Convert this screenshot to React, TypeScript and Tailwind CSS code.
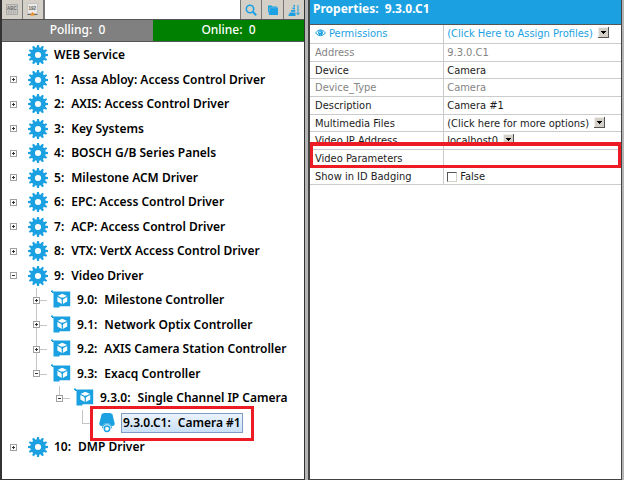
import type { ReactNode } from "react";
import clsx from "clsx";

type NodeKind = "gear" | "controller" | "camera";

interface TreeNode {
  level: number;
  kind: NodeKind;
  id?: string;
  name: string;
  toggle?: "plus" | "minus";
  last?: boolean;
  selected?: boolean;
}

const nodes: TreeNode[] = [
  { level: 0, kind: "gear", name: "WEB Service" },
  { level: 0, kind: "gear", id: "1", name: "Assa Abloy: Access Control Driver", toggle: "plus" },
  { level: 0, kind: "gear", id: "2", name: "AXIS: Access Control Driver", toggle: "plus" },
  { level: 0, kind: "gear", id: "3", name: "Key Systems", toggle: "plus" },
  { level: 0, kind: "gear", id: "4", name: "BOSCH G/B Series Panels", toggle: "plus" },
  { level: 0, kind: "gear", id: "5", name: "Milestone ACM Driver", toggle: "plus" },
  { level: 0, kind: "gear", id: "6", name: "EPC: Access Control Driver", toggle: "plus" },
  { level: 0, kind: "gear", id: "7", name: "ACP: Access Control Driver", toggle: "plus" },
  { level: 0, kind: "gear", id: "8", name: "VTX: VertX Access Control Driver", toggle: "plus" },
  { level: 0, kind: "gear", id: "9", name: "Video Driver", toggle: "minus" },
  { level: 1, kind: "controller", id: "9.0", name: "Milestone Controller", toggle: "plus" },
  { level: 1, kind: "controller", id: "9.1", name: "Network Optix Controller", toggle: "plus" },
  { level: 1, kind: "controller", id: "9.2", name: "AXIS Camera Station Controller", toggle: "plus" },
  { level: 1, kind: "controller", id: "9.3", name: "Exacq Controller", toggle: "minus", last: true },
  { level: 2, kind: "controller", id: "9.3.0", name: "Single Channel IP Camera", toggle: "minus", last: true },
  { level: 3, kind: "camera", id: "9.3.0.C1", name: "Camera #1", last: true, selected: true },
  { level: 0, kind: "gear", id: "10", name: "DMP Driver", toggle: "plus" },
];

const indents = ["pl-0", "pl-[23px]", "pl-[46px]", "pl-[69px]"];

const teeth = Array.from({ length: 12 }, (_, i) => i * 30);

function GearIcon() {
  return (
    <svg viewBox="0 0 20 20" className="h-5 w-5" fill="#1ba1e2" aria-hidden="true">
      {teeth.map((angle) => (
        <path key={angle} d="M8.5 4 L9 0 H11 L11.5 4 Z" transform={`rotate(${angle} 10 10)`} />
      ))}
      <circle cx="10" cy="10" r="5.4" fill="none" stroke="#1ba1e2" strokeWidth="4.7" />
    </svg>
  );
}

function ControllerIcon() {
  return (
    <svg viewBox="0 0 20 20" className="h-5 w-5" aria-hidden="true">
      <path d="M0 .5h2v1h17.200v14.700H8.500v1.200H2.500V3H1V2H0Z" fill="#1ba1e2" />
      <path d="M11.300 3.800 16.200 6v5.600l-4.900 2.600-4.900-2.600V6Z" fill="#fff" />
      <path d="m6.200 6.200 5.100 2.700 5.100-2.700M11.300 8.900v5.600" fill="none" stroke="#1ba1e2" strokeWidth="1.200" />
      <path d="m11.300 7.200 1.500 1.500-1.500 1.700-1.500-1.700Z" fill="#1ba1e2" />
    </svg>
  );
}

function CameraIcon() {
  return (
    <svg viewBox="0 0 20 20" className="h-5 w-5" fill="none" aria-hidden="true">
      <path d="M4.500 1.500Q6-.3 10-.3t5.500 1.800l2.300 9.500-.8 1.500-3.200 1H6.200l-3.200-1-.8-1.500Z" fill="#1ba1e2" />
      <circle cx="10" cy="15.300" r="5" fill="#fff" />
      <path d="M5.500 15.300a4.500 4.500 0 0 1 9 0" stroke="#1ba1e2" strokeWidth="1" />
      <circle cx="10" cy="15.800" r="2.700" stroke="#1ba1e2" strokeWidth="1.500" />
    </svg>
  );
}

const icons: Record<NodeKind, ReactNode> = {
  gear: <GearIcon />,
  controller: <ControllerIcon />,
  camera: <CameraIcon />,
};

function Toggle({ state, name }: { state: "plus" | "minus"; name: string }) {
  return (
    <button
      type="button"
      aria-label={`${state === "plus" ? "Expand" : "Collapse"} ${name}`}
      className="relative block h-[7px] w-[7px] bg-white"
    >
      <svg viewBox="0 0 7 7" className="h-[7px] w-[7px]" fill="none" shapeRendering="crispEdges">
        <path d="M.5 .5h6v6h-6Z" stroke="#a0a0a0" />
        <path d={state === "plus" ? "M2 3.500h3M3.500 2v3" : "M2 3.500h3"} stroke="#333" />
      </svg>
    </button>
  );
}

function TreeRow({ node }: { node: TreeNode }) {
  const label = node.id ? (
    <span className="flex gap-[7px]">
      <span>{node.id}:</span>
      <span>{node.name}</span>
    </span>
  ) : (
    node.name
  );
  return (
    <li
      role="treeitem"
      aria-level={node.level + 1}
      aria-selected={!!node.selected}
      className={clsx("flex items-center odd:h-6 even:h-[25px]", indents[node.level])}
    >
      <div className="relative flex h-full w-[26px] shrink-0 items-center pl-2">
        {node.level > 0 && (
          <>
            <span className={clsx("absolute left-[11px] top-0 w-px bg-[#c4c4c4]", node.last ? "h-1/2" : "h-full")} />
            <span className="absolute left-[11px] top-1/2 h-px w-[11px] bg-[#c4c4c4]" />
          </>
        )}
        {node.toggle && <Toggle state={node.toggle} name={node.name} />}
      </div>
      {icons[node.kind]}
      {node.selected ? (
        <div className="relative ml-1 whitespace-pre border border-[#7f9cc4] bg-linear-to-b from-[#eaf3fd] to-[#cbe0f8] px-px leading-[18px]">
          {label}
          <span className="pointer-events-none absolute -bottom-[9px] -left-8 -right-3 -top-2 border-[3px] border-[#ed1c24]" />
        </div>
      ) : (
        <span className="ml-[6px] whitespace-pre">{label}</span>
      )}
    </li>
  );
}

function ToolButton({ label, className, children }: { label: string; className?: string; children: ReactNode }) {
  return (
    <button
      type="button"
      aria-label={label}
      className={clsx("flex shrink-0 items-center justify-center border-[#777] bg-[#d4d0c8]", className)}
    >
      {children}
    </button>
  );
}

function Toolbar() {
  return (
    <div className="flex h-5 border-b border-[#555]">
      <ToolButton label="Sort by name" className="w-[21px] border-r">
        <svg viewBox="0 0 14 14" className="h-[14px] w-[14px]" fill="none">
          <path d="M1.500 1.500h11v10h-11Z" fill="#c9c7c3" stroke="#aaa8a4" />
          <text x="2" y="6.500" fontSize="4.500" fontWeight="700" fontFamily="Liberation Sans, sans-serif" fill="#6a6a6a">ABC</text>
          <path d="M3 8h8M3 9.800h8" stroke="#9a9a9a" strokeWidth=".8" strokeDasharray="1.500 1" />
        </svg>
      </ToolButton>
      <ToolButton label="Sort by number" className="w-[22px] border-r-2">
        <svg viewBox="0 0 14 14" className="h-[14px] w-[14px]" fill="none">
          <path d="M1.500 .5h10v10h-10Z" fill="#eceae6" stroke="#c6c4c0" />
          <text x="2.500" y="6.500" fontSize="4.500" fontWeight="700" fontFamily="Liberation Sans, sans-serif" fill="#555">192</text>
          <path d="M1.500 11.500h10" stroke="#666" />
          <path d="M4.500 11.500 6.500 9l2 2.500v1h-4Z" fill="#ee8e1e" />
        </svg>
      </ToolButton>
      <input type="text" aria-label="Search devices" className="min-w-0 flex-1 bg-white px-1 outline-none" />
      <ToolButton label="Search" className="w-[22px] border-l border-r">
        <svg viewBox="0 0 12 12" className="h-3 w-3" fill="none" stroke="#1ba1e2">
          <circle cx="5" cy="5" r="3.700" strokeWidth="1.600" />
          <path d="m7.700 7.700 3.500 3.500" strokeWidth="2" />
        </svg>
      </ToolButton>
      <ToolButton label="Open folder" className="w-[22px] border-r">
        <svg viewBox="0 0 12 12" className="h-3 w-3" fill="#1ba1e2">
          <path d="M1 1.500h3.500l1 1H10V4H2.500L1.500 9H1Z" />
          <path d="M2.800 3.500H11V11H1.800Z" />
          <path d="M2.500 3.800h8" stroke="#8cc4e0" strokeWidth=".5" />
        </svg>
      </ToolButton>
      <ToolButton label="Sort" className="w-5">
        <svg viewBox="0 0 12 12" className="h-3 w-3" fill="none" stroke="#1ba1e2">
          <path d="M5.500 1.800H7M4.500 4.300H7M3 6.800h4.200M1.500 9.300h6M.5 11.200h7" strokeWidth="1.700" />
          <path d="M10 1v9M8.500 8.800 10 10.800l1.500-2" />
        </svg>
      </ToolButton>
    </div>
  );
}

function DropDown({ id, value }: { id: string; value: string }) {
  return (
    <span className="relative block h-[14px] w-fit">
      <select
        id={id}
        defaultValue={value}
        className="block h-[14px] appearance-none bg-transparent p-0 pr-4 leading-[14px] outline-none [field-sizing:content]"
      >
        <option>{value}</option>
      </select>
      <svg viewBox="0 0 11 11" className="pointer-events-none absolute right-0 top-0 h-[11px] w-[11px]" shapeRendering="crispEdges">
        <path d="M0 0h11v11H0Z" fill="#555" />
        <path d="M0 0h10v10H0Z" fill="#eee" />
        <path d="M1 1h9v9H1Z" fill="#d4d0c8" />
        <path d="M3 4h5v1H7v1H6v1H5V6H4V5H3Z" fill="#000" />
      </svg>
    </span>
  );
}

interface Property {
  id: string;
  label: string;
  value?: string;
  type?: "select" | "check";
  tone?: string;
  highlight?: boolean;
}

const properties: Property[] = [
  { id: "permissions", label: "Permissions", value: "(Click Here to Assign Profiles)", type: "select", tone: "text-[#1ba1e2]" },
  { id: "address", label: "Address", value: "9.3.0.C1", tone: "text-[#848484]" },
  { id: "device", label: "Device", value: "Camera" },
  { id: "device-type", label: "Device_Type", value: "Camera", tone: "text-[#848484]" },
  { id: "description", label: "Description", value: "Camera #1" },
  { id: "multimedia", label: "Multimedia Files", value: "(Click here for more options)", type: "select" },
  { id: "video-ip", label: "Video IP Address", value: "localhost0", type: "select" },
  { id: "video-parameters", label: "Video Parameters", highlight: true },
  { id: "badging", label: "Show in ID Badging", value: "False", type: "check" },
];

function EyeIcon() {
  return (
    <svg viewBox="0 0 11 8" className="mr-[3px] inline-block h-2 w-[11px] align-baseline" fill="none" stroke="#1ba1e2" aria-hidden="true">
      <path d="M.5 4Q5.500-2.500 10.500 4 5.500 9.500 .5 4Z" />
      <circle cx="5.500" cy="3.800" r="2" fill="#1ba1e2" />
      <circle cx="5" cy="3.200" r=".7" fill="#fff" stroke="none" />
    </svg>
  );
}

function PropertyRow({ property }: { property: Property }) {
  const { id, label, value, type, tone, highlight } = property;
  return (
    <tr className={clsx("relative h-[18px] border-b border-[#cbcbcb] nth-[3n]:h-[17px]", tone ?? "text-[#1c1c1c]")}>
      <th scope="row" className="border-r border-[#cbcbcb] p-0 pl-[5px] pt-[2px] text-left align-top font-normal">
        {type ? (
          <label htmlFor={id}>
            {id === "permissions" && <EyeIcon />}
            {label}
          </label>
        ) : (
          label
        )}
      </th>
      <td className="p-0 pl-[3px] pt-[2px] align-top">
        {type === "select" && <DropDown id={id} value={value ?? ""} />}
        {type === "check" && (
          <span className="flex items-center gap-[3px]">
            <input
              id={id}
              type="checkbox"
              className="h-[10px] w-[10px] appearance-none border border-b-[#d4d0c8] border-l-[#555] border-r-[#d4d0c8] border-t-[#555] bg-white checked:bg-[#1ba1e2]"
            />
            {value}
          </span>
        )}
        {!type && value}
        {highlight && (
          <span className="pointer-events-none absolute -bottom-[2px] -top-[7px] left-0 right-0 border-[3px] border-t-4 border-[#ed1c24]" />
        )}
      </td>
    </tr>
  );
}

export default function App() {
  return (
    <div className="flex min-h-screen bg-[#b4b4b4] text-black">
      <section
        aria-label="Devices"
        className="flex min-w-0 flex-[305] flex-col border-b border-l-2 border-r border-[#333] bg-white font-['Noto_Sans','Open_Sans',sans-serif] text-[12px] font-semibold leading-5"
      >
        <Toolbar />
        <div className="flex h-[22px] border-b border-[#555] text-center font-medium text-white">
          <div className="flex-1 whitespace-pre bg-[#808080]">Polling:  0</div>
          <div className="flex-1 whitespace-pre bg-[#008000]">Online:  0</div>
        </div>
        <ul role="tree" className="pt-px">
          {nodes.map((node) => (
            <TreeRow key={node.name} node={node} />
          ))}
        </ul>
      </section>
      <section
        aria-label="Properties"
        className="ml-[3px] mr-[2px] min-w-0 flex-[314] border-b border-l-2 border-r border-[#444] bg-white font-['DejaVu_Sans_Condensed','DejaVu_Sans',sans-serif] text-[11px] leading-[14px]"
      >
        <h1 className="h-[25px] whitespace-pre border-b border-[#555] bg-[#1ba1e2] pl-[3px] font-['Noto_Sans',sans-serif] text-[12px] font-bold leading-[18px] text-white">
          Properties:  9.3.0.C1
        </h1>
        <table className="w-full table-fixed border-collapse">
          <colgroup>
            <col className="w-[43%]" />
            <col />
          </colgroup>
          <tbody>
            {properties.map((property) => (
              <PropertyRow key={property.id} property={property} />
            ))}
          </tbody>
        </table>
      </section>
    </div>
  );
}
